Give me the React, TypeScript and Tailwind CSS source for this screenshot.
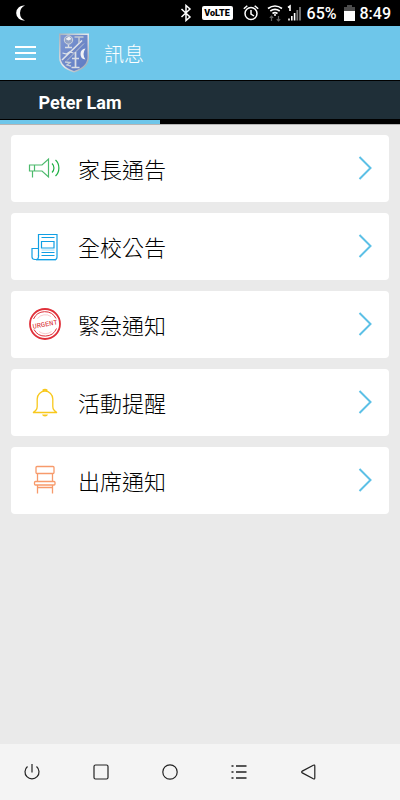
import React from "react";

type IconName = "horn" | "news" | "urgent" | "bell" | "chair";

const items: { icon: IconName; label: string }[] = [
  { icon: "horn", label: "家長通告" },
  { icon: "news", label: "全校公告" },
  { icon: "urgent", label: "緊急通知" },
  { icon: "bell", label: "活動提醒" },
  { icon: "chair", label: "出席通知" },
];

function ItemIcon({ name }: { name: IconName }) {
  const common = {
    width: 36,
    height: 36,
    viewBox: "0 0 36 36",
    fill: "none",
    "aria-hidden": true,
  };
  switch (name) {
    case "horn":
      return (
        <svg {...common} stroke="#4cba6c" strokeWidth="1.2">
          <path d="M2.500 15h12.500l6.500-6v18l-6.500-6H2.500zM7.500 15v6M5.500 21v6.500" />
          <path d="M25 13.500c2.600 2.400 2.600 6.600 0 9M28.500 10c4.500 4 4.500 12 0 16" stroke="#1fb045" />
        </svg>
      );
    case "news":
      return (
        <svg {...common} stroke="#119fe3" strokeWidth="1.200">
          <path d="M11.500 28V6.500h18.500v22.500q0 2.500-2 2.500H8q-3 0-3-2.500v-8.500h6.500" />
          <path d="M11.500 27v2q0 2-2 2.500" />
          <path d="M14.500 9.500h13M14.500 24.500h13M14.500 27.500h13" />
          <path d="M14.500 13.500h12.500v6.500H14.500z" />
          <path d="M14.500 22h13M9 32.500h20" stroke="#a5dcf6" strokeWidth="1" />
        </svg>
      );
    case "urgent":
      return (
        <svg {...common} stroke="#e0303a">
          <circle cx="18" cy="18" r="15" strokeWidth="1.800" />
          <path d="M6.500 13A12.500 12.500 0 0 1 29 12.500M7 23.500A12.500 12.500 0 0 0 29.500 22.500" strokeWidth="1" />
          <path d="M10.500 12.500A10 10 0 0 1 24 10.500M12 25.500A10 10 0 0 0 24.500 25.500" strokeWidth="0.800" opacity="0.300" />
          <text
            x="18"
            y="20.500"
            textAnchor="middle"
            transform="rotate(-10 18 18)"
            fill="#d81f2b"
            stroke="none"
            className="font-['Liberation_Mono',monospace] text-[7px]"
          >
            URGENT
          </text>
        </svg>
      );
    case "bell":
      return (
        <svg {...common} stroke="#f8c81c" strokeWidth="1.300">
          <path d="M6 28.500c3-1.500 4.200-3 4.200-6v-7.500a7.800 7.800 0 0 1 15.600 0v7.500c0 3 1.200 4.500 4.200 6z" />
          <path d="M15.700 6.800q2.300-2 4.600 0" strokeWidth="2" />
          <path d="M15 30.500h6q-.5 2-3 2t-3-2z" fill="#f8c81c" stroke="none" />
        </svg>
      );
    case "chair":
      return (
        <svg {...common} stroke="#f79a6b" strokeWidth="1.300">
          <rect x="9" y="4.500" width="18" height="7" rx="1" />
          <path d="M10.500 11.500v8M25.500 11.500v8M10.500 23v8.500M25.500 23v8.500M10.500 25.500h15" />
          <rect x="7.500" y="19.500" width="20.500" height="3.500" rx="1" />
        </svg>
      );
  }
}

function Crest() {
  return (
    <svg width="32" height="40" viewBox="0 0 32 40" aria-label="School crest" role="img">
      <defs>
        <linearGradient id="rim" x1="0" y1="0" x2="1" y2="1">
          <stop offset="0" stopColor="#a8b2bb" />
          <stop offset=".5" stopColor="#e6e9ed" />
          <stop offset="1" stopColor="#8f9aa6" />
        </linearGradient>
        <linearGradient id="field" x1="0" y1="0" x2="1" y2="1">
          <stop offset="0" stopColor="#7f98d2" />
          <stop offset="1" stopColor="#5d7ac2" />
        </linearGradient>
      </defs>
      <path d="M1 .5h30V24q0 11-15 15.500Q1 35 1 24z" fill="url(#rim)" />
      <path d="M2.500 2h27v22q0 9.500-13.500 14Q2.500 33.500 2.500 24z" fill="url(#field)" />
      <path d="m4 27.500 19-20 3.500 2.500L8 29z" fill="#6f86c4" />
      <path d="m4 27 20-19.500" stroke="#dfe4ea" strokeWidth="1.600" />
      <path d="m9 27.500 17-17" stroke="#b9c3d3" strokeWidth="1" />
      <path d="m4.500 20 4 1 3-2 4 1" stroke="#dfe4ea" strokeWidth="1.200" fill="none" />
      <circle cx="10.500" cy="7" r="4.200" fill="#93a3c6" stroke="#d3d8df" />
      <path d="m7.500 6 3.500-2.500L13.500 6l-3 1.500z" fill="#eef0f3" />
      <path d="M10.500 11.500V14M7 14.500h7" stroke="#d8dde4" strokeWidth="1.400" />
      <path d="M16.500 4h9M21 4v6" stroke="#c3cad4" strokeWidth="1.500" />
      <path d="M27.500 15.500q-4 5.500 0 11-5-.5-5-5.500t5-5.500z" fill="#f0f2f5" />
      <path d="M17.500 19v15M14 25.500h7M13.500 34.500h8" stroke="#d9dee5" strokeWidth="1.700" />
      <path d="m7 29 5 .5-3 2.500 4 1" stroke="#c6ced9" strokeWidth="1.400" fill="none" />
    </svg>
  );
}

function StatusBar() {
  return (
    <div className="flex h-[26px] items-center bg-black pl-[14px] pr-[9px] text-white">
      <svg width="12" height="16" viewBox="0 0 12 16" fill="white" aria-hidden="true">
        <path d="M11 .5A7.600 7.600 0 1 0 11 15.500Q6 13.500 6 8T11 .5z" />
      </svg>
      <div className="ml-auto flex items-center gap-[10px]">
        <svg width="12" height="18" viewBox="0 0 12 18" fill="none" stroke="white" strokeWidth="1.500" aria-hidden="true">
          <path d="m1.500 5 8.500 8-4 3.500v-15L10 5l-8.500 8" />
        </svg>
        <span className="flex h-[14px] w-[31px] items-center justify-center rounded-[2px] bg-white font-[Roboto,sans-serif] text-[9px] font-black leading-[14px] text-black">
          VoLTE
        </span>
        <div className="flex items-center gap-2">
          <svg width="16" height="18" viewBox="0 0 16 18" fill="none" stroke="white" strokeWidth="1.500" aria-hidden="true">
            <circle cx="8" cy="9.500" r="6" />
            <path d="M8 6v4l3 2M.8 4.800l3.500-3M15.200 4.800l-3.500-3" />
          </svg>
          <div className="flex items-center gap-1">
            <svg width="16" height="18" viewBox="0 0 16 18" fill="none" stroke="white" strokeWidth="1.600" aria-hidden="true">
              <path d="M1 4.500q7-5 14 0M3.300 7q4.700-3.300 9.400 0M5.500 9.500q2.500-1.800 5 0" />
              <circle cx="8" cy="11" r="1" fill="white" stroke="none" />
              <path d="M4.500 17v-5M2.800 13.800l1.700-1.800 1.700 1.800M11.500 12v5M9.800 15.200l1.700 1.800 1.700-1.800" stroke="#606060" strokeWidth="1.200" />
            </svg>
            <svg width="14" height="18" viewBox="0 0 14 18" fill="none" stroke="white" aria-hidden="true">
              <path d="m1 3.500 2-1.500v5M2 16.500v-2M4.800 16.500V12M7.600 16.500V9" strokeWidth="1.600" />
              <path d="M10.300 16.500V6M13 16.500V3" stroke="#777" strokeWidth="1.800" />
            </svg>
          </div>
          <div className="-ml-0.5 flex items-center gap-[7px]">
            <span className="pt-0.5 font-[Roboto,sans-serif] text-base font-medium leading-6">65%</span>
            <svg width="11" height="18" viewBox="0 0 11 18" aria-hidden="true">
              <path d="M3 1h5v2h3v5H0V3h3z" fill="#4c4c4c" />
              <path d="M0 7h11v10H0z" fill="white" />
            </svg>
            <span className="-ml-0.5 pt-0.5 font-[Roboto,sans-serif] text-base font-medium leading-6">8:49</span>
          </div>
        </div>
      </div>
    </div>
  );
}

const navIcons = [
  {
    label: "Power",
    art: <path d="M12 4v8.500M7.500 6.500a7 7 0 1 0 9 0" />,
  },
  { label: "Recent apps", art: <rect x="5" y="5" width="14" height="14" rx="1.500" /> },
  { label: "Home", art: <circle cx="12" cy="12" r="7.200" /> },
  {
    label: "Menu",
    art: <path d="M4.500 6h2M4.500 12h2M4.500 18h2M9 6h10.500M9 12h10.500M9 18h10.500" strokeWidth="1.700" />,
  },
  {
    label: "Back",
    art: <path d="M17.300 5.200q1.500-.7 1.500 1v11.600q0 1.700-1.500 1L6.300 12.900q-1.300-.9 0-1.800z" />,
  },
];

export default function App() {
  return (
    <div className="flex min-h-screen flex-col bg-[#eaeaea] font-['Noto_Sans_CJK_TC',sans-serif]">
      <StatusBar />
      <header className="flex h-[54px] items-center bg-[#6ec6ea] pl-[15px] text-white">
        <button type="button" aria-label="Open menu" className="flex h-[14px] w-[21px] flex-col justify-between">
          <span className="h-[2px] w-full bg-white" />
          <span className="h-[2px] w-full bg-white" />
          <span className="h-[2px] w-full bg-white" />
        </button>
        <div className="ml-[22px]">
          <Crest />
        </div>
        <h1 className="ml-[14px] pt-0.5 text-xl font-light leading-[30px]">訊息</h1>
      </header>
      <nav className="border-t border-black bg-black">
        <div className="bg-[#1f2f38]">
          <button
            type="button"
            className="block h-[38px] w-2/5 pt-1 text-center font-[Roboto,sans-serif] text-lg font-bold leading-9 text-white"
          >
            Peter Lam
          </button>
        </div>
        <div className="border-t border-black">
          <div className="h-1 w-2/5 bg-[#6ec6ea]" />
        </div>
      </nav>
      <main className="flex-1 border-t border-[#b5b5b5] px-[11px] pt-[10px]">
        <ul className="flex flex-col gap-[11px]">
          {items.map((item) => (
            <li key={item.icon}>
              <button type="button" className="flex h-[67px] w-full items-center rounded bg-white pb-0.5 pl-4 pr-[17px] text-left">
                <ItemIcon name={item.icon} />
                <span className="ml-[15px] text-[22px] font-light leading-8 text-black">{item.label}</span>
                <svg
                  className="ml-auto"
                  width="14"
                  height="24"
                  viewBox="0 0 14 24"
                  fill="none"
                  stroke="#5cc0e6"
                  strokeWidth="2"
                  aria-hidden="true"
                >
                  <path d="m1.500 1 11 11-11 11" />
                </svg>
              </button>
            </li>
          ))}
        </ul>
      </main>
      <footer className="flex h-14 items-center gap-[45px] bg-[#f4f4f4] pl-5">
        {navIcons.map((n) => (
          <button key={n.label} type="button" aria-label={n.label}>
            <svg width="24" height="24" viewBox="0 0 24 24" fill="none" stroke="#222" strokeWidth="1.200" aria-hidden="true">
              {n.art}
            </svg>
          </button>
        ))}
      </footer>
    </div>
  );
}
